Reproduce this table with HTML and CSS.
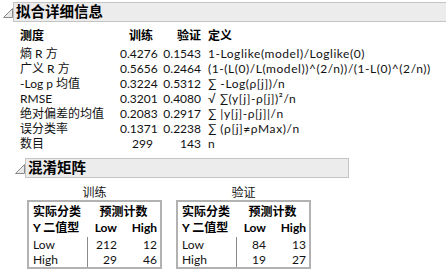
FILE: index.html
```html
<!DOCTYPE html>
<html lang="zh-CN">
<head>
<meta charset="utf-8">
<title>拟合详细信息</title>
<link rel="stylesheet" href="styles.css">
</head>
<body>
<div class="page">
  <section class="outline">
    <div class="ohead">
      <svg class="tri" width="10" height="10" viewBox="0 0 10 10"><polygon points="9.5,0.5 9.5,9.5 0.5,9.5" fill="#e9e9e9" stroke="#8a8a8a" stroke-width="1"/></svg>
      <div class="bar bar-main">拟合详细信息</div>
    </div>
    <div class="obody">
      <div class="fit">
        <div class="fh">测度</div><div class="fh num">训练</div><div class="fh num">验证</div><div class="fh def">定义</div>
        <div>熵 R 方</div><div class="num">0.4276</div><div class="num">0.1543</div><div class="def f">1-Loglike(model)/Loglike(0)</div>
        <div>广义 R 方</div><div class="num">0.5656</div><div class="num">0.2464</div><div class="def f">(1-(L(0)/L(model))^(2/n))/(1-L(0)^(2/n))</div>
        <div>-Log p 均值</div><div class="num">0.3224</div><div class="num">0.5312</div><div class="def f">∑ -Log(ρ[j])/n</div>
        <div>RMSE</div><div class="num">0.3201</div><div class="num">0.4080</div><div class="def f">√ ∑(y[j]-ρ[j])²/n</div>
        <div>绝对偏差的均值</div><div class="num">0.2083</div><div class="num">0.2917</div><div class="def f">∑ |y[j]-ρ[j]|/n</div>
        <div>误分类率</div><div class="num">0.1371</div><div class="num">0.2238</div><div class="def f">∑ (ρ[j]≠ρMax)/n</div>
        <div>数目</div><div class="num">299</div><div class="num">143</div><div class="def f">n</div>
      </div>

      <section class="outline sub">
        <div class="ohead">
          <svg class="tri" width="10" height="10" viewBox="0 0 10 10"><polygon points="9.5,0.5 9.5,9.5 0.5,9.5" fill="#e9e9e9" stroke="#8a8a8a" stroke-width="1"/></svg>
          <div class="bar bar-sub">混淆矩阵</div>
        </div>
        <div class="obody cm">
          <div class="cmcol">
            <div class="cap">训练</div>
            <div class="cmt">
              <div class="h lab">实际分类</div><div class="h span">预测计数</div>
              <div class="h lab">Y 二值型</div><div class="h r">Low</div><div class="h r last">High</div>
              <div class="d lab first">Low</div><div class="d r line first">212</div><div class="d r last first">12</div>
              <div class="d lab">High</div><div class="d r line">29</div><div class="d r last">46</div>
            </div>
          </div>
          <div class="cmcol">
            <div class="cap">验证</div>
            <div class="cmt">
              <div class="h lab">实际分类</div><div class="h span">预测计数</div>
              <div class="h lab">Y 二值型</div><div class="h r">Low</div><div class="h r last">High</div>
              <div class="d lab first">Low</div><div class="d r line first">84</div><div class="d r last first">13</div>
              <div class="d lab">High</div><div class="d r line">19</div><div class="d r last">27</div>
            </div>
          </div>
        </div>
      </section>
    </div>
  </section>
</div>
</body>
</html>
```

FILE: styles.css
```css
html, body {
  margin: 0;
  padding: 0;
  background: #ffffff;
}
body {
  font-family: Lato, "Noto Sans CJK SC", sans-serif;
  font-size: 12px;
  color: #111111;
}
.page {
  padding: 2px 0 0 3px;
}
.ohead {
  display: flex;
  align-items: center;
}
.tri {
  display: block;
  flex: none;
  width: 10px;
  height: 10px;
  margin-top: 1px;
}
.bar {
  height: 18px;
  line-height: 18px;
  border: 1px solid #c4c4c4;
  background: #ececec;
  font-weight: bold;
  font-size: 14.5px;
  padding-left: 2px;
  color: #000;
  white-space: nowrap;
}
.bar-main {
  flex: 1;
  border-right: 0;
}
.bar-sub {
  width: 320px;
}
.obody {
  padding: 6px 0 0 12px;
}
.fit {
  display: grid;
  grid-template-columns: 100px 33px 48px auto;
  margin-left: 5px;
  line-height: 15px;
  white-space: nowrap;
}
.fh {
  font-weight: bold;
  padding-bottom: 3px;
  color: #000;
}
.num {
  text-align: right;
}
.def {
  padding-left: 7px;
}
.f {
  letter-spacing: 0.55px;
}
.sub {
  margin-top: 7px;
}
.cm {
  display: flex;
  gap: 14px;
  padding-top: 7px;
}
.cmcol {
  display: flex;
  flex-direction: column;
}
.cap {
  text-align: center;
  line-height: 15px;
}
.cmt {
  display: grid;
  grid-template-columns: 58px 30px 43px;
  border: 2px solid #b2b2b2;
  padding-top: 2px;
  white-space: nowrap;
}
.h {
  font-weight: bold;
  line-height: 16px;
  color: #000;
}
.lab {
  padding-left: 4px;
}
.span {
  grid-column: span 2;
  text-align: center;
}
.d {
  line-height: 15px;
}
.first {
  margin-top: 1px;
}
.r {
  text-align: right;
}
.last {
  padding-right: 3px;
}
.line {
  border-left: 1px solid #8a8a8a;
}
```
